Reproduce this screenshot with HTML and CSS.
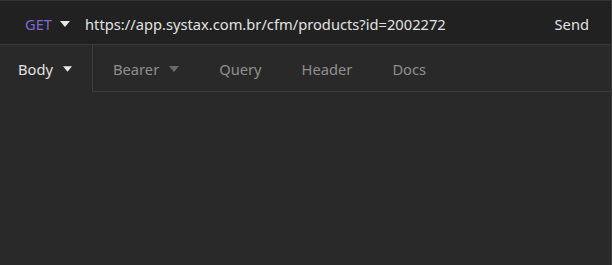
FILE: index.html
```html
<!DOCTYPE html>
<html>
<head>
  <meta charset="UTF-8">
  <title>Request</title>
  <link rel="stylesheet" href="styles.css">
</head>
<body>
  <div class="pane">
    <div class="urlbar">
      <button class="method">GET
        <svg class="caret" width="10" height="6" viewBox="0 0 10 6"><path d="M0 0h10L5 6z"/></svg>
      </button>
      <div class="url">https://app.systax.com.br/cfm/products?id=2002272</div>
      <button class="send">Send</button>
    </div>

    <div class="tabs">
      <div class="tab tab-active">Body
        <svg class="caret" width="10" height="6" viewBox="0 0 10 6"><path d="M0 0h10L5 6z"/></svg>
      </div>
      <div class="tab">Bearer
        <svg class="caret" width="10" height="6" viewBox="0 0 10 6"><path d="M0 0h10L5 6z"/></svg>
      </div>
      <div class="tab">Query</div>
      <div class="tab">Header</div>
      <div class="tab">Docs</div>
      <div class="tab-fill"></div>
    </div>

    <div class="editor"></div>
  </div>
</body>
</html>
```

FILE: styles.css
```css
html, body {
  margin: 0;
  height: 100%;
  background-color: #292929;
}
body, button {
  font-family: "Noto Sans", "Open Sans", sans-serif;
  font-size: 14.7px;
}
.pane {
  height: 100%;
  box-sizing: border-box;
  border-right: 1px solid #3a3a3a;
  display: flex;
  flex-direction: column;
}
.urlbar {
  height: 45px;
  box-sizing: border-box;
  display: flex;
  align-items: center;
  padding-top: 3px;
  background-color: #212121;
  border-top: 1px solid #333;
  border-bottom: 1px solid #3a3a3a;
}
.urlbar button {
  background: none;
  border: 0;
  padding: 0;
  cursor: pointer;
}
.method {
  display: flex;
  align-items: center;
  gap: 8px;
  margin-left: 25px;
  color: #7d6ad0;
}
.method .caret {
  fill: #e8e8e8;
}
.url {
  flex: 1;
  margin-left: 15px;
  color: #e2e2e2;
}
.send {
  color: #e2e2e2;
  margin-right: 22px;
}
.tabs {
  display: flex;
  height: 47px;
}
.tab {
  display: flex;
  align-items: center;
  gap: 10px;
  padding: 2px 20px 0;
  color: #8f8f8f;
  border-bottom: 1px solid #3d3d3d;
}
.tab .caret {
  fill: #6a6a6a;
}
.tab-active {
  width: 93px;
  box-sizing: border-box;
  padding-left: 18px;
  color: #e2e2e2;
  border-bottom-color: transparent;
  border-right: 1px solid #3d3d3d;
}
.tab-active .caret {
  fill: #e8e8e8;
}
.tab-fill {
  flex: 1;
  border-bottom: 1px solid #3d3d3d;
}
.editor {
  flex: 1;
}
```
